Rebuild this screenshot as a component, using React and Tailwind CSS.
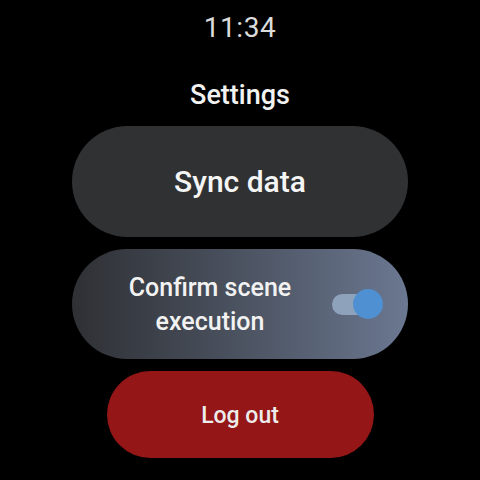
import React, { useState } from 'react';

const App = () => {
  const [confirmScene, setConfirmScene] = useState(true);

  return (
    <div className="w-[480px] h-[480px] bg-black flex flex-col items-center overflow-hidden" style={{ fontFamily: 'Roboto, "Noto Sans", sans-serif' }}>
      {/* Clock */}
      <div className="mt-[12px] h-[32px] text-[28px] leading-[32px] text-[#dcdcdc] tracking-[0.6px]">11:34</div>

      {/* Title */}
      <h1 className="mt-[36px] h-[30px] text-[27px] leading-[30px] font-medium text-[#f2f2f2]">Settings</h1>

      {/* Actions */}
      <div className="mt-[16px] flex flex-col items-center gap-[12px]">
        <button className="w-[336px] h-[111px] rounded-full bg-[#303133] text-[#f5f5f5] text-[30px] font-medium">
          Sync data
        </button>

        <button
          onClick={() => setConfirmScene(!confirmScene)}
          className="w-[336px] h-[110px] rounded-full bg-gradient-to-r from-[#2e3034] to-[#6b7891] flex items-center pl-[36px] pr-[25px]"
        >
          <span className="flex-1 text-center text-[25px] leading-[34px] font-medium text-[#f2f2f2] pt-[2px]">
            Confirm scene<br />execution
          </span>
          <span className="relative w-[51px] h-[30px] flex items-center ml-[20px]">
            <span className="w-[48px] h-[21px] rounded-full bg-[#8fa2bb]" />
            <span className={`absolute top-0 w-[30px] h-[30px] rounded-full bg-[#4f90d2] ${confirmScene ? 'right-0' : 'left-0'}`} />
          </span>
        </button>

        <button className="w-[267px] h-[87px] rounded-full bg-[#951616] text-[#ececec] text-[23px] font-medium pt-[4px]">
          Log out
        </button>
      </div>
    </div>
  );
};

export default App;
